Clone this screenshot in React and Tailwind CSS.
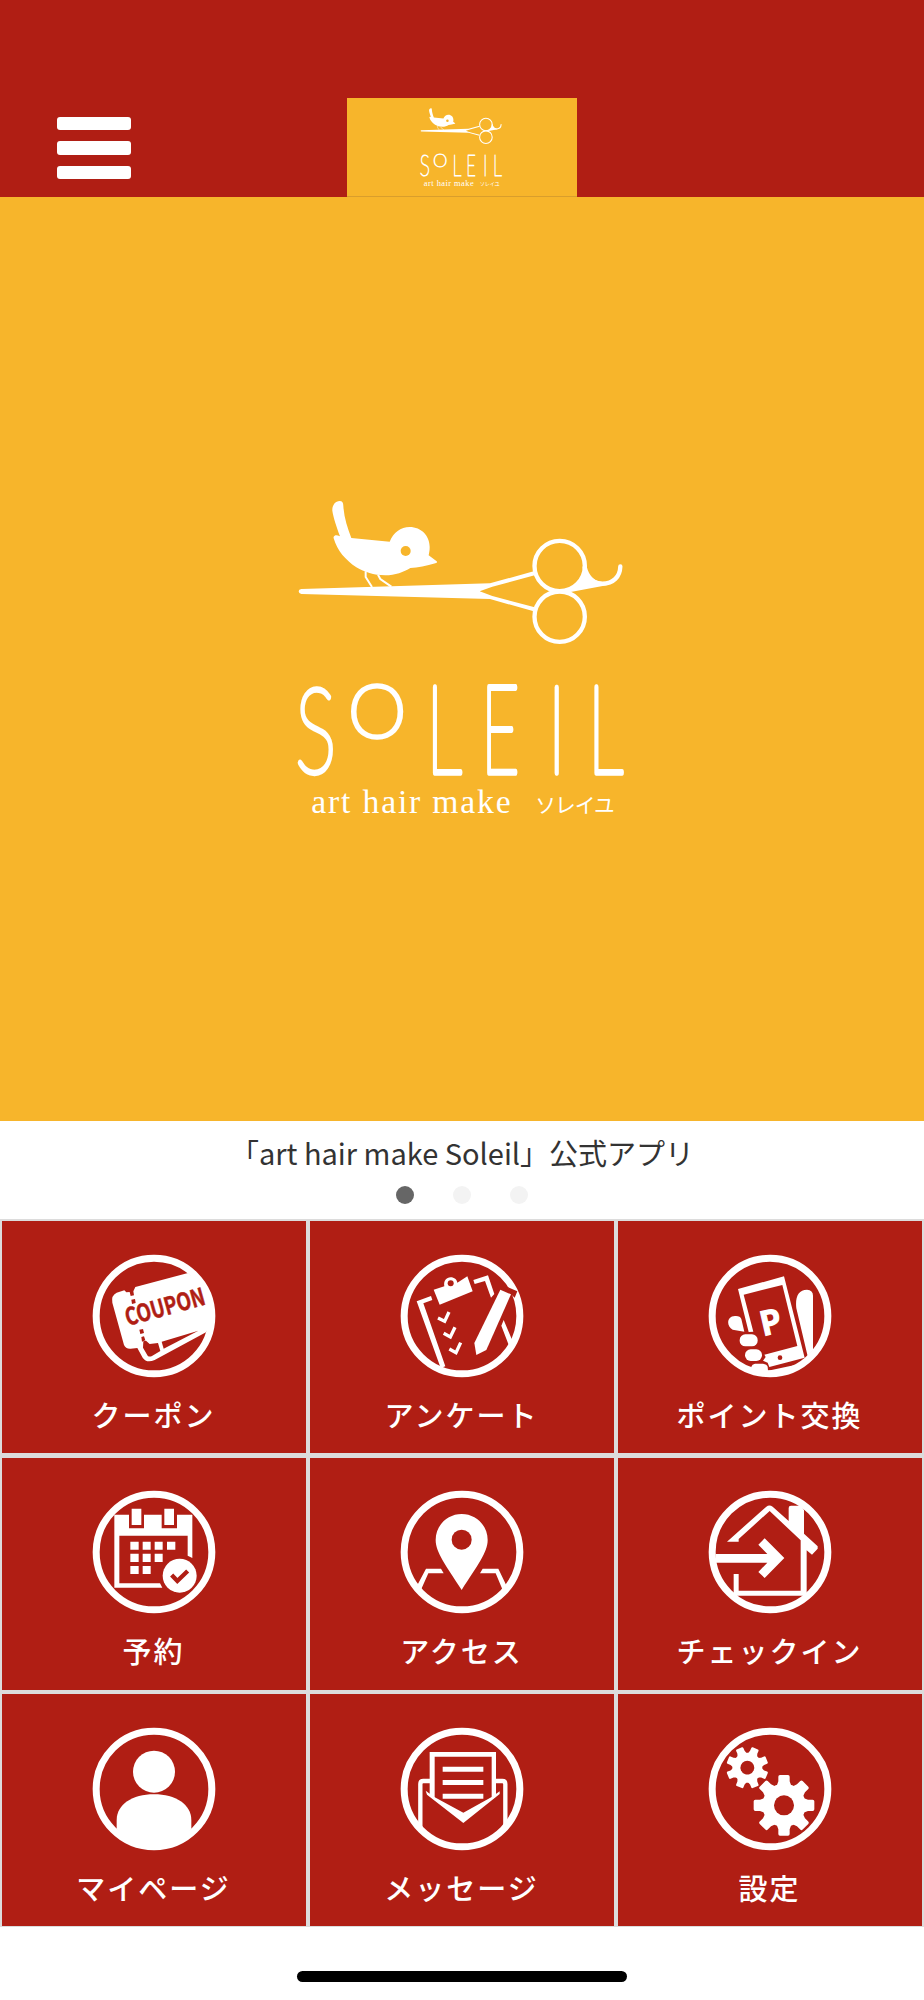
import React from "react";

const RED = "#b01e14";

const Logo = ({ className, stroke }) => {
  return (
    <svg className={className} viewBox="0 0 1080 1050" fill="#fff">
      {/* bird */}
      <path d="M164 167C168 165 173 166 180 169C170 142 160 112 157 92C156 76 166 63 179 63C187 63 190 68 190 78C192 112 202 142 214 174L329 185C340 158 362 141 389 141C425 141 450 169 449 203C449 212 447 219 446 226L470 244C473 247 470 249 466 250C440 258 413 263 391 264C372 276 345 286 316 286C280 286 254 276 229 262C196 240 172 212 161 175C160 171 161 168 164 167Z" />
      <circle cx="377" cy="213" r="15" fill="#f7b52b" />
      <path
        d="M257 274V291L276 321M294 284L301 297L334 320"
        fill="none"
        stroke="#fff"
        strokeWidth="6"
      />
      {/* scissors */}
      <path d="M64 327L630 310L761 274L764 286L637 320L599 334L637 348L764 382L761 394L630 357L64 342Q56 341 56 334Q56 328 64 327Z" />
      <g fill="none" stroke="#fff" strokeWidth="13">
        <circle cx="839" cy="258" r="75.5" />
        <circle cx="839" cy="410" r="75.5" />
        <path
          d="M1021 259C1020 290 1000 311 967 311C945 311 922 297 914 262"
          strokeLinecap="round"
        />
      </g>
      <path d="M914 250C918 278 936 303 967 306L980 316L872 336L839 336V328L868 327C892 314 912 290 914 250Z" />
      {/* wordmark */}
      <g
        fontFamily="Lato, sans-serif"
        fontWeight="100"
        fontSize="368"
        stroke="#fff"
        strokeWidth={stroke}
        strokeLinejoin="round"
      >
        <text vectorEffect="non-scaling-stroke" transform="translate(46 880) scale(.63 .96)">S</text>
        <text vectorEffect="non-scaling-stroke" transform="translate(205 770) scale(.6 .58)">O</text>
        <text vectorEffect="non-scaling-stroke" transform="translate(439 879) scale(.58 1)">L</text>
        <text vectorEffect="non-scaling-stroke" transform="translate(603 879) scale(.54 1)">E</text>
        <text vectorEffect="non-scaling-stroke" transform="translate(803 879) scale(.6 1)">I</text>
        <text vectorEffect="non-scaling-stroke" transform="translate(923 879) scale(.58 1)">L</text>
      </g>
      <text
        x="94"
        y="1000"
        fontSize="101"
        textLength="598"
        fontFamily="'Liberation Serif', serif"
      >
        art hair make
      </text>
      <text
        x="766"
        y="1000"
        fontSize="62"
        textLength="238"
        fontFamily="'Noto Sans CJK JP', sans-serif"
      >
        ソレイユ
      </text>
    </svg>
  );
};

const Gear = ({ x, y, size, angle }) => {
  return (
    <g transform={`translate(${x} ${y}) rotate(${angle}) scale(${size})`}>
      <circle r="65" />
      {[0, 45, 90, 135, 180, 225, 270, 315].map((a) => (
        <path
          key={a}
          transform={`rotate(${a})`}
          d="M-22 -58L-17 -72V-86Q-17 -91 -12 -91H12Q17 -91 17 -86V-72L22 -58Z"
        />
      ))}
      <circle r="30" fill={RED} />
    </g>
  );
};

const CouponIcon = () => (
  <svg className="size-[126px] overflow-visible" viewBox="31 38 378 378" fill="#fff">
    <circle cx="220" cy="227" r="173.5" fill="none" stroke="#fff" strokeWidth="21" />
    <path d="M108 157L131 150L137 156L147 155L150 167L160 165L158 153L164 140L322 98C362 127 389 170 394 220C394 240 388 258 376 276L222 359C206 366 194 364 186 352L170 323L150 325Q135 326 130 314L95 187Q91 165 108 157Z" />
    <path d="M187 322L201 346Q206 351 214 347L239 332L232 308L207 311L196 301L188 303Z" fill={RED} />
    <path d="M243 304L353 271L249 325Z" fill={RED} />
    <path d="M152 178L163 176L165 188L154 191ZM176 268L187 266L190 278L179 281ZM182 290L190 288L194 300L184 304Z" fill={RED} />
    <text
      transform="translate(141 257) rotate(-15.5)"
      fill={RED}
      stroke={RED}
      strokeWidth="1.5"
      fontSize="72"
      fontWeight="700"
      textLength="246"
      lengthAdjust="spacingAndGlyphs"
      fontFamily="'Noto Sans CJK JP', sans-serif"
    >
      COUPON
    </text>
  </svg>
);

const SurveyIcon = () => (
  <svg className="size-[126px]" viewBox="38 40 378 378" fill="#fff">
    <circle cx="227" cy="229" r="173.5" fill="none" stroke="#fff" strokeWidth="21" />
    <path d="M142 150L174 140C171 124 180 113 193 113C204 113 212 120 213 129L243 110L259 155L160 195Z" />
    <circle cx="193" cy="131" r="9" fill={RED} />
    <path d="M91 185L134 169L138 181L111 191L177 380L163 385ZM261 121L305 107L324 163L314 174L296 124L265 133ZM352 241L377 300L368 318L345 258Z" />
    <path d="M342 150L374 164L300 331L270 346L264 310Z" />
    <path d="M364 142L393 155L385 174L374 164Z" fill={RED} />
    <g fill="none" stroke="#fff" strokeWidth="10">
      <path d="M155 235L175 245L188 217M172 281L192 292L206 263M189 328L209 339L223 309" />
    </g>
  </svg>
);

const PointIcon = () => (
  <svg className="size-[126px]" viewBox="36 38 378 378" fill="#fff">
    <circle cx="225" cy="227" r="173.5" fill="none" stroke="#fff" strokeWidth="21" />
    <path d="M129 146L267 108L329 352L223 380L218 367L204 361L212 350L208 343L307 317L262 134L146 163L175 274L161 275Z" />
    <circle cx="255" cy="352" r="7" fill={RED} />
    <path d="M304 204C300 170 310 148 336 148Q354 149 354 166V330L338 348ZM139 236L148 274L113 268C94 258 94 228 120 227C130 226 137 230 139 236Z" />
    <rect x="134" y="282" width="54" height="36" rx="17" />
    <rect x="150" y="327" width="51" height="35" rx="17" />
    <path d="M169 390V379Q171 371 180 370H204Q216 372 218 379L219 391L300 374L260 400H190Z" />
    <text
      transform="translate(205 287) rotate(-13)"
      fontSize="98"
      fontWeight="700"
      stroke="#fff"
      strokeWidth="4"
      textLength="62"
      lengthAdjust="spacingAndGlyphs"
      fontFamily="'Noto Sans CJK JP', sans-serif"
    >
      P
    </text>
  </svg>
);

const ReserveIcon = () => (
  <svg className="size-[126px]" viewBox="31 34 378 378" fill="#fff">
    <circle cx="220" cy="223" r="173.5" fill="none" stroke="#fff" strokeWidth="21" />
    <path d="M101 111H145V152H190V111H243V152H289V111H335V241L321 234V174H116V317H238L245 330H101Z" />
    <path d="M153 93H182V142H153ZM251 93H280V142H251Z" />
    <path d="M149 192H174V216H149ZM186 192H210V216H186ZM222 192H246V216H222ZM259 192H284V216H259ZM149 228H174V253H149ZM186 228H210V253H186ZM222 228H246V253H222ZM149 265H174V289H149ZM186 265H210V289H186Z" />
    <circle cx="297" cy="294" r="51" />
    <path d="M273 292L290 310L321 280" fill="none" stroke={RED} strokeWidth="13" />
  </svg>
);

const AccessIcon = () => (
  <svg className="size-[126px]" viewBox="36 34 378 378" fill="#fff">
    <circle cx="225" cy="223" r="173.5" fill="none" stroke="#fff" strokeWidth="21" />
    <path d="M224 109C267 109 302 143 302 187C302 225 270 265 224 337C178 265 146 225 146 187C146 143 181 109 224 109Z" />
    <circle cx="224" cy="186" r="30" fill={RED} />
    <path d="M117 273H162L170 287H124L102 336L88 328ZM287 273H334L360 327L347 337L326 287H279Z" />
  </svg>
);

const CheckinIcon = () => (
  <svg className="size-[126px]" viewBox="36 34 378 378" fill="#fff">
    <circle cx="225" cy="223" r="173.5" fill="none" stroke="#fff" strokeWidth="21" />
    <path d="M96 192L214 87Q223 80 233 87L281 130V91Q281 84 288 84H318L327 97V168L368 206V213L351 231L335 218V354H116V289H131V339H317V188L224 100L131 184V192Z" />
    <path d="M62 229H217L190 201L209 182L268 241L209 301L190 283L217 255H62Z" />
  </svg>
);

const MypageIcon = () => (
  <svg className="size-[126px]" viewBox="31 34 378 378" fill="#fff">
    <circle cx="220" cy="223" r="173.5" fill="none" stroke="#fff" strokeWidth="21" />
    <circle cx="220" cy="171" r="63" />
    <path d="M108 343V316C108 270 155 239 220 239C285 239 332 270 332 316V343C305 380 265 402 220 402C175 402 135 380 108 343Z" />
  </svg>
);

const MessageIcon = () => (
  <svg className="size-[126px]" viewBox="37 744 378 378" fill="#fff">
    <circle cx="226" cy="933" r="173.5" fill="none" stroke="#fff" strokeWidth="21" />
    <path d="M129 822H328V956L315 964V836H144V962L129 952Z" />
    <path d="M168 866H290V881H168ZM168 906H290V921H168ZM168 947H290V962H168Z" />
    <path d="M117 938L143 957L230 1004L315 957L339 940V948L230 1035L121 950Z" />
    <path
      d="M130 909H110Q101 909 101 918V1050M327 909H347Q356 909 356 918V1050"
      fill="none"
      stroke="#fff"
      strokeWidth="13"
    />
  </svg>
);

const SettingsIcon = () => (
  <svg className="size-[126px]" viewBox="36 33 378 378" fill="#fff">
    <circle cx="225" cy="222" r="173.5" fill="none" stroke="#fff" strokeWidth="21" />
    <Gear x={157} y={158} size={0.69} angle={22.5} />
    <Gear x={267} y={271} size={1} angle={0} />
  </svg>
);

const menus = [
  { label: "クーポン", icon: <CouponIcon /> },
  { label: "アンケート", icon: <SurveyIcon /> },
  { label: "ポイント交換", icon: <PointIcon /> },
  { label: "予約", icon: <ReserveIcon /> },
  { label: "アクセス", icon: <AccessIcon /> },
  { label: "チェックイン", icon: <CheckinIcon /> },
  { label: "マイページ", icon: <MypageIcon /> },
  { label: "メッセージ", icon: <MessageIcon /> },
  { label: "設定", icon: <SettingsIcon /> },
];

const App = () => {
  return (
    <div className="flex h-[2000px] w-[924px] flex-col bg-white font-['Noto_Sans_CJK_JP',sans-serif]">
      <header className="grid h-[197px] shrink-0 grid-cols-[347px_230px_347px] items-end bg-[#b01e14]">
        <button className="mb-[18px] ml-[57px] flex w-[74px] flex-col gap-[11px]">
          <span className="h-[13.5px] w-full rounded-[3px] bg-white" />
          <span className="h-[13.5px] w-full rounded-[3px] bg-white" />
          <span className="h-[13.5px] w-full rounded-[3px] bg-white" />
        </button>
        <div className="flex h-[99px] justify-center border-b border-[#d99e2c] bg-[#f7b52b] pt-[5px] pr-0.5">
          <Logo className="h-[87.5px] w-[90px]" stroke={1} />
        </div>
      </header>

      <section className="flex h-[924px] shrink-0 justify-center bg-[#f7b52b] pt-[283px] pr-1">
        <Logo className="h-[350px] w-[360px]" stroke={4.5} />
      </section>

      <section className="flex h-[98px] shrink-0 flex-col items-center">
        <p className="mt-2.5 h-[55px] text-[29px] leading-[42px] whitespace-nowrap text-[#333]">
          「art hair make Soleil」公式アプリ
        </p>
        <div className="flex gap-[39px]">
          <span className="size-[18px] rounded-full bg-[#666]" />
          <span className="size-[18px] rounded-full bg-[#f3f3f3]" />
          <span className="size-[18px] rounded-full bg-[#f3f3f3]" />
        </div>
      </section>

      <nav className="grid h-[708px] shrink-0 grid-cols-3 grid-rows-3 gap-x-1 gap-y-[4.5px] bg-[#dcdcdc] px-0.5 pt-0.5 pb-px">
        {menus.map((menu) => {
          return (
            <a
              key={menu.label}
              className="flex flex-col items-center bg-[#b01e14] pt-[31.5px] pr-px"
            >
              {menu.icon}
              <span className="mt-3.5 text-[29px] leading-[42px] font-medium tracking-[2px] text-white">
                {menu.label}
              </span>
            </a>
          );
        })}
      </nav>

      <div className="mx-auto mt-[44px] h-[11px] w-[330px] rounded-full bg-black" />
    </div>
  );
};

export default App;
